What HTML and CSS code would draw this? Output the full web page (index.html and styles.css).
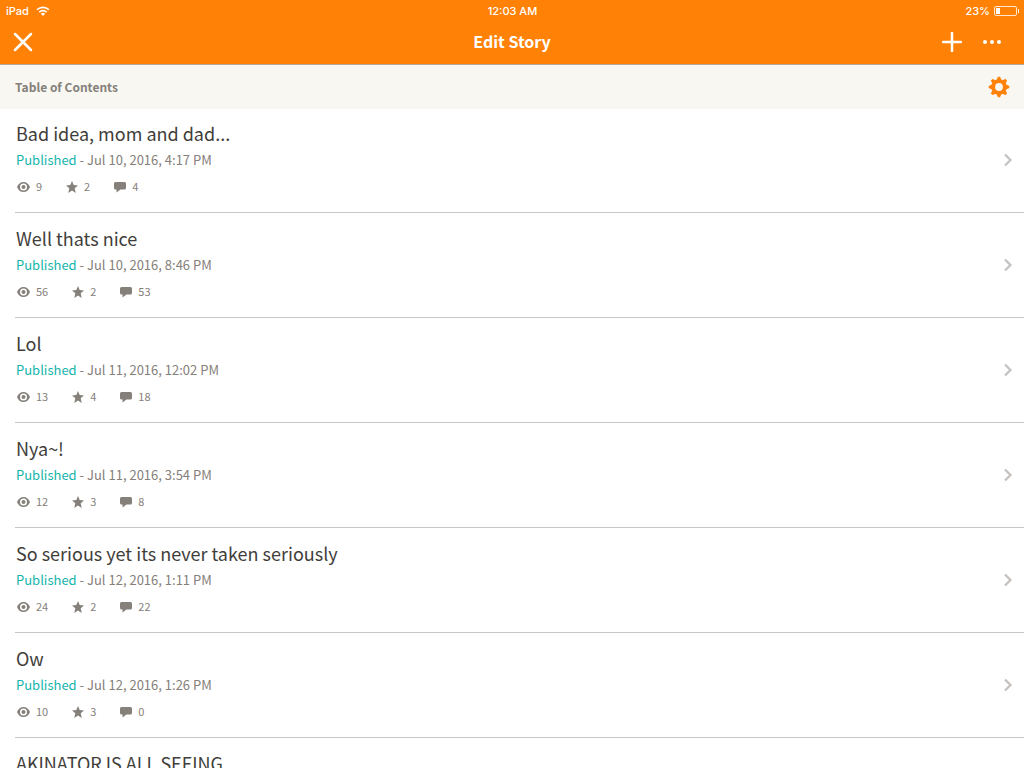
FILE: index.html
```html
<!DOCTYPE html>
<html lang="en">
<head>
    <meta charset="utf-8">
    <meta name="viewport" content="width=device-width, initial-scale=1">
    <title>Edit Story</title>
    <link rel="stylesheet" href="styles.css">
</head>
<body>

    <!-- Icons used by every row -->
    <svg class="sprite" aria-hidden="true">
        <symbol id="eye" viewBox="0 0 14 12">
            <path fill-rule="evenodd" d="M7.500 1C4.500 1 2.100 3 1 6c1.100 3 3.500 5 6.500 5s5.400-2 6.500-5C12.900 3 10.500 1 7.500 1zm0 1.500a3.500 3.500 0 1 1 0 7 3.500 3.500 0 0 1 0-7z"/>
            <circle cx="7.500" cy="6" r="2"/>
        </symbol>
        <symbol id="star" viewBox="0 0 12 12">
            <path d="M6 0l1.700 4.100 4.300.3-3.300 2.900L9.700 12 6 9.600 2.300 12l1-4.700L0 4.400l4.300-.3z"/>
        </symbol>
        <symbol id="comment" viewBox="0 0 12 12">
            <path d="M1.500 1h9A1.500 1.500 0 0 1 12 2.500v4.500a1.500 1.500 0 0 1-1.500 1.500H6.500L2.500 11.500v-3h-1A1.500 1.500 0 0 1 0 7V2.500A1.500 1.500 0 0 1 1.500 1z"/>
        </symbol>
        <symbol id="chevron" viewBox="0 0 10 14">
            <path d="M2 1.500L7.500 7 2 12.500" fill="none" stroke="currentColor" stroke-width="2.200"/>
        </symbol>
    </svg>

    <header class="top">
        <div class="status-bar">
            <div class="device">
                iPad
                <svg width="14" height="10" viewBox="0 0 14 10">
                    <path d="M1 3.800a8.600 8.600 0 0 1 12 0M3.300 6.100a5.300 5.300 0 0 1 7.400 0" fill="none" stroke="#fff" stroke-width="1.600"/>
                    <path d="M7 10L4.900 7.800a3 3 0 0 1 4.200 0z" fill="#fff"/>
                </svg>
            </div>
            <div>12:03 AM</div>
            <div class="battery">
                23%
                <svg width="25" height="10" viewBox="0 0 25 10">
                    <rect x=".5" y=".5" width="22" height="9" rx="1.500" fill="none" stroke="#fff" stroke-opacity=".8"/>
                    <rect x="2" y="2" width="4" height="6" fill="#fff"/>
                    <path d="M24 3a2 2 0 0 1 0 4z" fill="#fff"/>
                </svg>
            </div>
        </div>
        <div class="nav">
            <button class="icon-btn" type="button" aria-label="Close">
                <svg width="20" height="20" viewBox="0 0 20 20"><path d="M2 2l16 16M18 2L2 18"/></svg>
            </button>
            <h1>Edit Story</h1>
            <div class="actions">
                <button class="icon-btn" type="button" aria-label="Add part">
                    <svg width="20" height="20" viewBox="0 0 20 20"><path d="M10 1v18M1 10h18"/></svg>
                </button>
                <button class="icon-btn" type="button" aria-label="More">
                    <svg class="dots" width="20" height="20" viewBox="0 0 20 20"><circle cx="3" cy="10" r="2"/><circle cx="10" cy="10" r="2"/><circle cx="17" cy="10" r="2"/></svg>
                </button>
            </div>
        </div>
    </header>

    <main>
        <div class="section-bar">
            <h2>Table of Contents</h2>
            <button class="icon-btn gear" type="button" aria-label="Settings">
                <svg width="22" height="22" viewBox="-11 -11 22 22">
                    <circle r="5.800" fill="none" stroke-width="3.800"/>
                    <g id="teeth">
                        <path id="tooth" class="tooth" d="M-2.400-7L-1.100-10.300h2.200L2.400-7z"/>
                        <use href="#tooth" transform="rotate(45)"/>
                        <use href="#tooth" transform="rotate(90)"/>
                        <use href="#tooth" transform="rotate(135)"/>
                    </g>
                    <use href="#teeth" transform="rotate(180)"/>
                </svg>
            </button>
        </div>

        <ul class="parts" id="parts"></ul>
    </main>

    <script>
        const parts = [
            { title: 'Bad idea, mom and dad...', date: 'Jul 10, 2016, 4:17 PM', reads: 9, votes: 2, comments: 4 },
            { title: 'Well thats nice', date: 'Jul 10, 2016, 8:46 PM', reads: 56, votes: 2, comments: 53 },
            { title: 'Lol', date: 'Jul 11, 2016, 12:02 PM', reads: 13, votes: 4, comments: 18 },
            { title: 'Nya~!', date: 'Jul 11, 2016, 3:54 PM', reads: 12, votes: 3, comments: 8 },
            { title: 'So serious yet its never taken seriously', date: 'Jul 12, 2016, 1:11 PM', reads: 24, votes: 2, comments: 22 },
            { title: 'Ow', date: 'Jul 12, 2016, 1:26 PM', reads: 10, votes: 3, comments: 0 },
            { title: 'AKINATOR IS ALL SEEING' }
        ];

        // One stat: icon and number
        function stat(icon, label, count) {
            return `<span class="stat" title="${label}"><svg class="${icon}"><use href="#${icon}"/></svg>${count}</span>`;
        }

        // Build the list
        document.getElementById('parts').innerHTML = parts.map(part => `
            <li>
                <a class="part" href="#">
                    <div class="info">
                        <h3>${part.title}</h3>
                        ${part.date ? `
                        <p class="meta"><span class="published">Published</span> - ${part.date}</p>
                        <div class="stats">
                            ${stat('eye', 'Reads', part.reads)}
                            ${stat('star', 'Votes', part.votes)}
                            ${stat('comment', 'Comments', part.comments)}
                        </div>` : ''}
                    </div>
                    ${part.date ? '<svg class="chevron"><use href="#chevron"/></svg>' : ''}
                </a>
            </li>
        `).join('');
    </script>

</body>
</html>
```
FILE: styles.css
```css
* {
    box-sizing: border-box;
}
html, body {
    height: 100%;
}
body {
    margin: 0;
    display: flex;
    flex-direction: column;
    overflow: hidden;
    background: white;
    color: #3f3e3b;
    font-family: "Noto Sans CJK SC", "Noto Sans", sans-serif;
}
h1, h2, h3, p, ul {
    margin: 0;
    padding: 0;
}
svg {
    display: block;
    flex: none;
}
.sprite {
    position: absolute;
    width: 0;
    height: 0;
}
.top {
    flex: none;
    background: #ff8207;
    color: white;
    border-bottom: 1px solid #b2a89c;
}
.status-bar, .nav {
    display: grid;
    grid-template-columns: 1fr auto 1fr;
    align-items: center;
}
.status-bar {
    height: 20px;
    padding: 2px 5px 0 6px;
    font-family: Inter, "Liberation Sans", sans-serif;
    font-size: 11px;
    font-weight: 500;
}
.device, .battery {
    display: flex;
    align-items: center;
    gap: 7px;
}
.battery {
    justify-content: flex-end;
    gap: 4px;
}
.nav {
    height: 44px;
    padding: 0 13px;
}
.nav h1 {
    padding-bottom: 2px;
    font-size: 16px;
    font-weight: 700;
    line-height: 24px;
}
.icon-btn {
    background: none;
    border: none;
    padding: 0;
    cursor: pointer;
    justify-self: start;
}
.icon-btn svg {
    fill: none;
    stroke: white;
    stroke-width: 2.5;
    stroke-linecap: round;
}
.icon-btn .dots {
    fill: white;
    stroke: none;
}
.actions {
    display: flex;
    justify-content: flex-end;
    gap: 20px;
    padding-right: 9px;
}
.section-bar {
    display: flex;
    justify-content: space-between;
    align-items: center;
    height: 44px;
    padding: 0 14px 0 15px;
    background: #f8f7f2;
}
.section-bar h2 {
    color: #85807a;
    font-size: 12px;
    font-weight: 700;
    line-height: 18px;
}
.icon-btn.gear svg {
    stroke: #ff8207;
}
.icon-btn .tooth {
    fill: #ff8207;
    stroke: none;
}
main {
    flex: 1;
    min-height: 0;
    overflow: hidden;
}
.parts {
    list-style: none;
    margin: -1px 0 0 15px;
}
.part {
    display: flex;
    justify-content: space-between;
    align-items: center;
    height: 105px;
    padding: 0 11px 0 1px;
    border-bottom: 1px solid #c8c7c5;
    color: inherit;
    text-decoration: none;
}
.info {
    align-self: flex-start;
    padding-top: 11px;
}
.part h3 {
    font-size: 18px;
    font-weight: 400;
    line-height: 28px;
}
.meta {
    color: #85807a;
    font-size: 13px;
    line-height: 26px;
}
.published {
    color: #14b4ac;
}
.stats {
    display: flex;
    gap: 24px;
    margin-top: 4px;
}
.stat {
    display: flex;
    align-items: center;
    gap: 6px;
    color: #85807a;
    font-size: 11px;
    line-height: 18px;
}
.stat svg {
    width: 12px;
    height: 12px;
    margin-top: 2px;
    fill: #85807a;
}
.stat .eye {
    width: 14px;
}
.chevron {
    width: 10px;
    height: 14px;
    color: #c4c1be;
}
```
